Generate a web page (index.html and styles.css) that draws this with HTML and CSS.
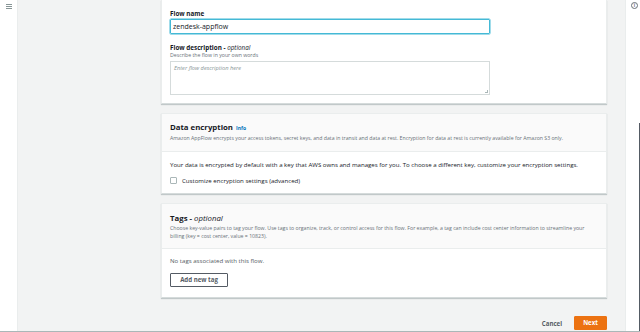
FILE: index.html
```html
<!DOCTYPE html>
<html lang="en">
<head>
    <meta charset="UTF-8">
    <title>Create flow - Amazon AppFlow</title>
    <link rel="stylesheet" href="styles.css">
</head>
<body>
    <div class="page">
        <nav class="side-nav">
            <span class="burger"><i></i><i></i><i></i></span>
        </nav>

        <main class="content">
            <!-- flow details -->
            <section class="card card-top">
                <div class="card-body">
                    <div class="field">
                        <label class="label">Flow name</label>
                        <div class="input focused">zendesk-appflow</div>
                    </div>
                    <div class="field">
                        <label class="label">Flow description - <em>optional</em></label>
                        <div class="hint">Describe the flow in your own words</div>
                        <div class="textarea"><span class="placeholder">Enter flow description here</span><span class="grip"></span></div>
                    </div>
                </div>
            </section>

            <!-- encryption -->
            <section class="card card-enc">
                <div class="card-head">
                    <h2>Data encryption <a class="info">Info</a></h2>
                    <p>Amazon AppFlow encrypts your access tokens, secret keys, and data in transit and data at rest. Encryption for data at rest is currently available for Amazon S3 only.</p>
                </div>
                <div class="card-body">
                    <p class="text">Your data is encrypted by default with a key that AWS owns and manages for you. To choose a different key, customize your encryption settings.</p>
                    <label class="check"><span class="box"></span>Customize encryption settings (advanced)</label>
                </div>
            </section>

            <!-- tags -->
            <section class="card card-tags">
                <div class="card-head">
                    <h2>Tags - <em>optional</em></h2>
                    <p>Choose key-value pairs to tag your flow. Use tags to organize, track, or control access for this flow. For example, a tag can include cost center information to streamline your billing (key = cost center, value = 10823).</p>
                </div>
                <div class="card-body">
                    <p class="text muted">No tags associated with this flow.</p>
                    <button class="btn">Add new tag</button>
                </div>
            </section>

            <div class="actions">
                <button class="link-btn">Cancel</button>
                <button class="btn primary">Next</button>
            </div>
        </main>

        <aside class="tools">
            <span class="info-icon">i</span>
            <span class="scroll"></span>
        </aside>
    </div>
</body>
</html>
```

FILE: styles.css
```css
* {
    box-sizing: border-box;
}

body {
    margin: 0;
    font-family: 'Open Sans', 'Liberation Sans', sans-serif;
    font-size: 6px;
    line-height: 9px;
    color: #16191f;
    background-color: #f2f3f3;
}

.page {
    display: flex;
    height: 332px;
    overflow: hidden;
    border-bottom: 1px solid #aab7b8;
}

.side-nav {
    width: 18px;
    flex-shrink: 0;
    background-color: #fff;
    border-right: 1px solid #eaeded;
    padding: 4px 0 0 6px;
}

.burger {
    display: flex;
    flex-direction: column;
    gap: 1px;
    width: 6px;
}

.burger i {
    display: block;
    height: 1px;
    background-color: #879596;
}

.content {
    flex: 1;
    padding: 0 18px 0 143px;
    display: flex;
    flex-direction: column;
    gap: 9px;
}

.content > * {
    flex-shrink: 0;
}

.card {
    background-color: #fff;
    border: 1px solid #eaeded;
    border-bottom-color: #d5dbdb;
    box-shadow: 0 1px 1px rgba(0, 28, 36, 0.2);
}

.card-top {
    border-top: none;
    height: 104px;
}

.card-body {
    padding: 8px;
}

.card-top .card-body {
    padding-top: 9px;
}

.field + .field {
    margin-top: 9px;
}

.label {
    display: block;
    font-size: 6.3px;
    font-weight: 700;
}

.label em {
    font-weight: 400;
}

.hint {
    font-size: 5.2px;
    color: #687078;
    line-height: 7px;
}

.input {
    width: 320px;
    height: 15px;
    margin-top: 1px;
    border: 1px solid #aab7b8;
    border-radius: 1px;
    font-size: 7px;
    line-height: 13px;
    padding: 0 2px;
}

.input.focused {
    border-color: #44b9d6;
    box-shadow: 0 0 0 0.5px #44b9d6;
}

.textarea {
    position: relative;
    width: 320px;
    height: 34px;
    margin-top: 2px;
    border: 1px solid #d5dbdb;
    padding: 2px 3px;
}

.placeholder {
    font-size: 5.7px;
    font-style: italic;
    color: #879596;
}

.grip {
    position: absolute;
    right: 1px;
    bottom: 1px;
    width: 3px;
    height: 3px;
    border-right: 1px solid #aab7b8;
    border-bottom: 1px solid #aab7b8;
}

.card-head {
    background-color: #fafafa;
    border-bottom: 1px solid #eaeded;
    padding: 8px 8px 9px 8px;
}

.card-head h2 {
    margin: 0;
    font-size: 7.8px;
    font-weight: 700;
    line-height: 11px;
}

.card-head h2 em {
    font-weight: 400;
}

.card-head p {
    margin: 0;
    font-size: 5.2px;
    line-height: 8px;
    color: #687078;
}

.info {
    font-size: 5px;
    color: #0073bb;
    font-weight: 700;
    margin-left: 1px;
}

.text {
    margin: 0;
    font-size: 6.1px;
}

.muted {
    color: #545b64;
}

.check {
    display: flex;
    align-items: center;
    gap: 5px;
    margin-top: 7px;
    font-size: 6.1px;
}

.check .box {
    width: 7px;
    height: 7px;
    border: 1px solid #aab7b8;
    border-radius: 1px;
}

.card-enc .card-body {
    padding-bottom: 8px;
}

.card-tags .card-head {
    padding-top: 9px;
    padding-bottom: 8px;
}

.card-tags .card-body {
    padding-top: 7px;
    padding-bottom: 10px;
}

.card-tags .text {
    margin-bottom: 8px;
}

.btn {
    display: block;
    font-family: inherit;
    font-size: 6.1px;
    font-weight: 700;
    color: #545b64;
    background-color: #fff;
    border: 1px solid #545b64;
    border-radius: 1px;
    height: 14px;
    width: 58px;
    padding: 0;
    line-height: 12px;
}

.actions {
    display: flex;
    justify-content: flex-end;
    align-items: center;
    gap: 12px;
    margin-top: 9px;
}

.link-btn {
    font-family: inherit;
    font-size: 6.1px;
    font-weight: 700;
    color: #545b64;
    background: none;
    border: none;
    padding: 0;
}

.btn.primary {
    background-color: #ec7211;
    border-color: #ec7211;
    color: #fff;
    width: 33px;
}

.tools {
    position: relative;
    width: 15px;
    flex-shrink: 0;
    background-color: #fff;
    border-left: 1px solid #eaeded;
}

.info-icon {
    display: block;
    width: 7px;
    height: 7px;
    margin: 2px 0 0 5px;
    border: 1px solid #687078;
    border-radius: 50%;
    font-size: 4.5px;
    font-weight: 700;
    line-height: 5px;
    text-align: center;
    color: #687078;
}

.scroll {
    position: absolute;
    right: 0;
    top: 123px;
    bottom: 0;
    width: 1px;
    background-color: #545b64;
}
```
